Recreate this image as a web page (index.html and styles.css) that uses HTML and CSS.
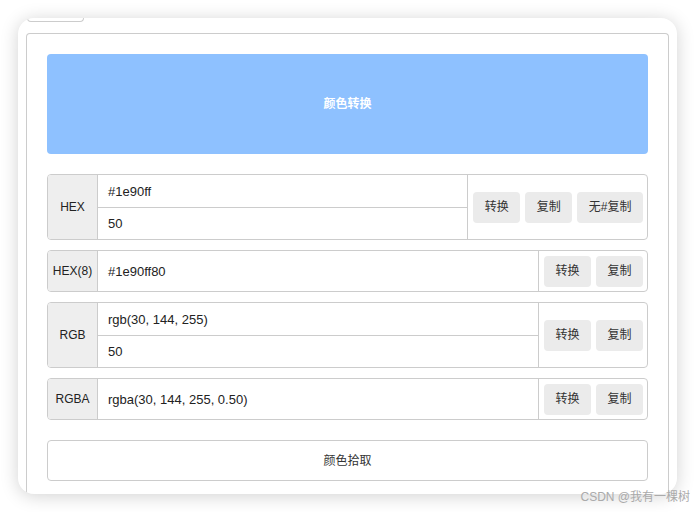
FILE: index.html
```html
<!DOCTYPE html>
<html>
	<head>
		<meta charset="utf-8">
		<title>颜色转换</title>
		<link rel="stylesheet" href="styles.css">
	</head>
	<body>
		<div class="cc-window">
			<div class="cc-tab"></div>
			<div class="cc-panel">
				<div class="cc-convert">颜色转换</div>

				<div class="cc-row cc-row-tall">
					<div class="cc-label">HEX</div>
					<div class="cc-inputs">
						<div class="cc-input">#1e90ff</div>
						<div class="cc-input">50</div>
					</div>
					<div class="cc-btns">
						<span class="cc-btn">转换</span>
						<span class="cc-btn">复制</span>
						<span class="cc-btn">无#复制</span>
					</div>
				</div>

				<div class="cc-row">
					<div class="cc-label">HEX(8)</div>
					<div class="cc-inputs">
						<div class="cc-input">#1e90ff80</div>
					</div>
					<div class="cc-btns">
						<span class="cc-btn">转换</span>
						<span class="cc-btn">复制</span>
					</div>
				</div>

				<div class="cc-row cc-row-tall">
					<div class="cc-label">RGB</div>
					<div class="cc-inputs">
						<div class="cc-input">rgb(30, 144, 255)</div>
						<div class="cc-input">50</div>
					</div>
					<div class="cc-btns">
						<span class="cc-btn">转换</span>
						<span class="cc-btn">复制</span>
					</div>
				</div>

				<div class="cc-row">
					<div class="cc-label">RGBA</div>
					<div class="cc-inputs">
						<div class="cc-input">rgba(30, 144, 255, 0.50)</div>
					</div>
					<div class="cc-btns">
						<span class="cc-btn">转换</span>
						<span class="cc-btn">复制</span>
					</div>
				</div>

				<div class="cc-pick">颜色拾取</div>
			</div>
		</div>
		<div class="cc-mark">CSDN @我有一棵树</div>
	</body>
</html>
```

FILE: styles.css
```css
html, body{
	margin: 0;
	padding: 0;
	background: #ffffff;
}
body{
	position: relative;
	width: 694px;
	height: 512px;
	padding: 18px;
	box-sizing: border-box;
	font-family: "Liberation Sans", "Noto Sans CJK SC", sans-serif;
	color: #222222;
	overflow: hidden;
}
.cc-window{
	width: 659px;
	height: 476px;
	padding: 0 8px;
	box-sizing: border-box;
	background: #ffffff;
	border-radius: 16px;
	box-shadow: 0 2px 18px rgba(0, 0, 0, 0.18);
	overflow: hidden;
}
.cc-tab{
	width: 55px;
	height: 3px;
	margin-left: 1px;
	margin-bottom: 11px;
	border: 1px solid #cccccc;
	border-top: none;
	border-radius: 0 0 4px 4px;
}
.cc-panel{
	height: 470px;
	padding: 20px;
	border: 1px solid #cccccc;
	border-bottom: none;
	border-radius: 4px 4px 0 0;
}
.cc-convert{
	height: 100px;
	line-height: 100px;
	text-align: center;
	font-size: 12px;
	font-weight: bold;
	color: #ffffff;
	background: #8ec1ff;
	border-radius: 4px;
	margin-bottom: 20px;
}

.cc-row{
	display: flex;
	height: 42px;
	box-sizing: border-box;
	border: 1px solid #cccccc;
	border-radius: 4px;
	margin-bottom: 10px;
	overflow: hidden;
}
.cc-row-tall{
	height: 66px;
}
.cc-label{
	width: 49px;
	display: flex;
	align-items: center;
	justify-content: center;
	font-size: 12px;
	background: #eeeeee;
	border-right: 1px solid #cccccc;
}
.cc-inputs{
	flex: 1;
	display: flex;
	flex-direction: column;
}
.cc-input{
	flex: 1;
	display: flex;
	align-items: center;
	padding: 1px 0 0 10px;
	font-size: 13px;
}
.cc-input + .cc-input{
	border-top: 1px solid #cccccc;
}
.cc-btns{
	display: flex;
	align-items: center;
	gap: 5px;
	padding: 0 4px 0 5px;
	border-left: 1px solid #cccccc;
}
.cc-btn{
	height: 31px;
	line-height: 31px;
	padding: 0 11.5px;
	font-size: 12px;
	color: #333333;
	background: #ebebeb;
	border-radius: 4px;
}

.cc-pick{
	height: 41px;
	line-height: 40px;
	box-sizing: border-box;
	margin-top: 20px;
	text-align: center;
	font-size: 12px;
	color: #333333;
	border: 1px solid #cccccc;
	border-radius: 4px;
}

.cc-mark{
	position: absolute;
	right: 4px;
	bottom: 8px;
	font-size: 12px;
	color: #aaaaaa;
}
```
